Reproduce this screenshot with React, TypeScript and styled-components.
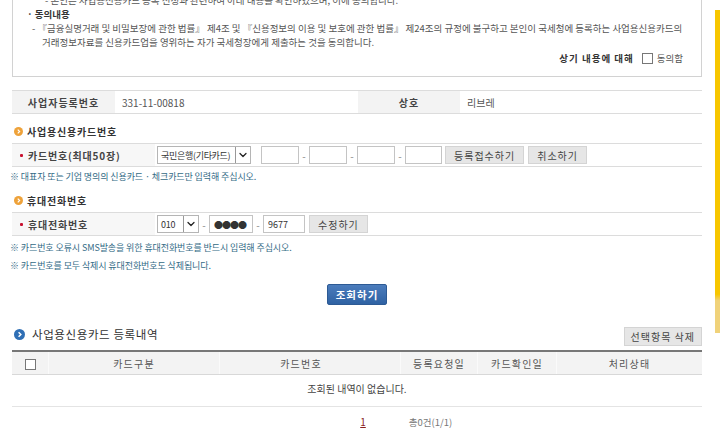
import styled, { createGlobalStyle } from 'styled-components';
import { ChevronDown } from 'lucide-react';

const GlobalStyle = createGlobalStyle`
  html, body {
    margin: 0;
    padding: 0;
    background: #fff;
    overflow: hidden;
  }
  body {
    font-family: "Noto Sans CJK KR", "Noto Sans", sans-serif;
    font-size: 10px;
    color: #555;
  }
`;

const Page = styled.div`
  width: 690px;
  margin-left: 12px;
`;

const AgreeBox = styled.div`
  margin-top: -20px;
  border: 1px solid #d2d2d2;
  padding: 12px 16px 11px 14px;
  font-size: 9.5px;
  letter-spacing: 0;
  line-height: 14px;
  color: #555;
`;

const BoxLine = styled.div<{ $indent?: number; $bold?: boolean }>`
  padding-left: ${(p) => p.$indent || 0}px;
  font-weight: ${(p) => (p.$bold ? 700 : 400)};
  color: ${(p) => (p.$bold ? '#333' : '#555')};
  white-space: nowrap;
`;

const AgreeRow = styled.div`
  margin-top: 2px;
  display: flex;
  justify-content: flex-end;
  align-items: center;
  gap: 8px;
  padding-right: 2px;
  strong {
    color: #333;
    letter-spacing: 1px;
  }
  label {
    display: flex;
    align-items: center;
    gap: 4px;
  }
`;

const CheckBox = styled.span`
  display: inline-block;
  width: 9px;
  height: 9px;
  border: 1px solid #777;
  background: #fff;
`;

const InfoTable = styled.div`
  margin-top: 13px;
  display: grid;
  grid-template-columns: 103px 243px 102px 1fr;
  border-top: 1px solid #dcdcdc;
  border-bottom: 1px solid #dcdcdc;
  height: 22px;
`;

const InfoLabel = styled.div`
  background: #f3f3f3;
  display: flex;
  align-items: center;
  justify-content: center;
  font-weight: 700;
  color: #444;
  letter-spacing: 1px;
`;

const InfoValue = styled.div`
  display: flex;
  align-items: center;
  padding-left: 7px;
  color: #555;
`;

const SectionTitle = styled.div<{ $top: number }>`
  margin-top: ${(p) => p.$top}px;
  display: flex;
  align-items: center;
  gap: 4px;
  height: 14px;
  padding-left: 2px;
  font-weight: 700;
  color: #333;
  letter-spacing: 0.8px;
`;

const FormRow = styled.div`
  margin-top: 5px;
  display: grid;
  grid-template-columns: 143px 1fr;
  border-top: 1px solid #dcdcdc;
  border-bottom: 1px solid #dcdcdc;
  height: 22px;
`;

const FormLabel = styled.div`
  background: #f7f7f7;
  display: flex;
  align-items: center;
  gap: 5px;
  padding-left: 8px;
  font-weight: 700;
  color: #444;
  letter-spacing: 0.8px;
`;

const Req = styled.span`
  width: 3px;
  height: 3px;
  background: #c8102e;
  border-radius: 1px;
`;

const Controls = styled.div`
  display: flex;
  align-items: center;
  padding-left: 2px;
  color: #666;
`;

const FakeSelect = styled.div<{ $w: number }>`
  width: ${(p) => p.$w}px;
  height: 18px;
  box-sizing: border-box;
  border: 1px solid #b5b5b5;
  display: flex;
  align-items: center;
  justify-content: space-between;
  padding-left: 3px;
  font-size: 9px;
  letter-spacing: -0.3px;
  white-space: nowrap;
  overflow: hidden;
  color: #333;
  background: #fff;
`;

const Arrow = styled.span`
  flex: none;
  width: 14px;
  height: 16px;
  border-left: 1px solid #999;
  display: flex;
  align-items: center;
  justify-content: center;
  color: #222;
`;

const Field = styled.input<{ $w: number }>`
  width: ${(p) => p.$w}px;
  height: 18px;
  box-sizing: border-box;
  border: 1px solid #c4c4c4;
  font-family: inherit;
  font-size: 9px;
  padding: 0 4px;
  color: #333;
  outline: none;
`;

const Dash = styled.span`
  width: 10px;
  text-align: center;
  color: #888;
`;

const GrayButton = styled.button<{ $ml?: number; $h?: number; $px?: number }>`
  height: ${(p) => p.$h ?? 18}px;
  margin-left: ${(p) => p.$ml ?? 4}px;
  padding: 0 ${(p) => p.$px ?? 8}px;
  border: 1px solid #d4d4d4;
  background: #e6e6e6;
  font-family: inherit;
  font-size: 10px;
  color: #444;
  letter-spacing: 1px;
  cursor: pointer;
`;

const Note = styled.div<{ $top: number }>`
  margin-top: ${(p) => p.$top}px;
  margin-left: -2px;
  line-height: 18px;
  font-size: 9px;
  color: #336b86;
  letter-spacing: -0.1px;
`;

const Center = styled.div`
  margin-top: 9px;
  display: flex;
  justify-content: center;
`;

const BlueButton = styled.button`
  height: 21px;
  padding: 0 8px;
  border: 1px solid #2d5a94;
  border-radius: 2px;
  background: linear-gradient(#4b7cbc, #2f62a3);
  color: #fff;
  font-family: inherit;
  font-size: 10.5px;
  font-weight: 700;
  letter-spacing: 1px;
`;

const ListHead = styled.div`
  margin-top: 22px;
  display: flex;
  align-items: flex-start;
  justify-content: space-between;
  height: 19px;
`;

const ListTitle = styled.div`
  margin-top: -1px;
  display: flex;
  align-items: center;
  gap: 7px;
  height: 16px;
  padding-left: 2px;
  font-size: 11.5px;
  color: #333;
  letter-spacing: 0.6px;
`;

const Table = styled.table`
  margin-top: 4px;
  width: 100%;
  border-collapse: collapse;
  border-top: 2px solid #777;
  th {
    height: 22px;
    background: #f3f3f3;
    font-weight: 400;
    color: #555;
    letter-spacing: 1.2px;
    border-bottom: 1px solid #d8d8d8;
    border-left: 1px solid #fafafa;
    padding: 0;
  }
  th:first-child {
    border-left: none;
  }
  td {
    height: 27px;
    padding: 0 0 4px;
    text-align: center;
    border-bottom: 1px solid #e4e4e4;
    color: #444;
  }
`;

const Pager = styled.div`
  margin-top: 8px;
  display: grid;
  grid-template-columns: 1fr auto 1fr;
  align-items: center;
  height: 14px;
`;

const PageNum = styled.span`
  padding-left: 12px;
  color: #8a1f1f;
  text-decoration: underline;
  font-size: 10px;
  line-height: 12px;
`;

const Total = styled.span`
  padding-left: 43px;
  color: #777;
  font-size: 9.5px;
`;

const SideTab = styled.div`
  position: fixed;
  right: 0;
  top: 10px;
  width: 5px;
  height: 323px;
  background: linear-gradient(#f7c600 0, #f7c600 88%, #f0d27a 90%, #f0d27a 100%);
`;

const Dot = ({ color, size }: { color: string; size: number }) => (
  <svg width={size} height={size} viewBox="0 0 12 12">
    <circle cx="6" cy="6" r="6" fill={color} />
    <path d="M5 3.5 L7.5 6 L5 8.5" stroke="#fff" strokeWidth="1.6" fill="none" />
  </svg>
);

const App = () => {
  return (
    <>
      <GlobalStyle />
      <SideTab />
      <Page>
        <AgreeBox>
          <BoxLine $indent={18}>- 본인은 사업용신용카드 등록 신청과 관련하여 아래 내용을 확인하였으며, 이에 동의합니다.</BoxLine>
          <BoxLine $bold>· 동의내용</BoxLine>
          <BoxLine $indent={5}>- 『금융실명거래 및 비밀보장에 관한 법률』 제4조 및 『신용정보의 이용 및 보호에 관한 법률』 제24조의 규정에 불구하고 본인이 국세청에 등록하는 사업용신용카드의</BoxLine>
          <BoxLine $indent={15}>거래정보자료를 신용카드업을 영위하는 자가 국세청장에게 제출하는 것을 동의합니다.</BoxLine>
          <AgreeRow>
            <strong>상기 내용에 대해</strong>
            <label>
              <CheckBox />
              동의함
            </label>
          </AgreeRow>
        </AgreeBox>

        <InfoTable>
          <InfoLabel>사업자등록번호</InfoLabel>
          <InfoValue>331-11-00818</InfoValue>
          <InfoLabel>상호</InfoLabel>
          <InfoValue>리브레</InfoValue>
        </InfoTable>

        <SectionTitle $top={10}>
          <Dot color="#eea23a" size={9} />
          사업용신용카드번호
        </SectionTitle>
        <FormRow>
          <FormLabel>
            <Req />
            카드번호(최대50장)
          </FormLabel>
          <Controls>
            <FakeSelect $w={94}>
              국민은행(기타카드)
              <Arrow>
                <ChevronDown size={12} strokeWidth={2.5} />
              </Arrow>
            </FakeSelect>
            <Field $w={38} style={{ marginLeft: 10 }} readOnly />
            <Dash>-</Dash>
            <Field $w={38} readOnly />
            <Dash>-</Dash>
            <Field $w={38} readOnly />
            <Dash>-</Dash>
            <Field $w={37} readOnly />
            <GrayButton $ml={3}>등록접수하기</GrayButton>
            <GrayButton>취소하기</GrayButton>
          </Controls>
        </FormRow>
        <Note $top={1}>※ 대표자 또는 기업 명의의 신용카드 · 체크카드만 입력해 주십시오.</Note>

        <SectionTitle $top={7}>
          <Dot color="#eea23a" size={9} />
          휴대전화번호
        </SectionTitle>
        <FormRow>
          <FormLabel>
            <Req />
            휴대전화번호
          </FormLabel>
          <Controls>
            <FakeSelect $w={42}>
              010
              <Arrow>
                <ChevronDown size={12} strokeWidth={2.5} />
              </Arrow>
            </FakeSelect>
            <Dash>-</Dash>
            <Field $w={44} value="●●●●" readOnly style={{ fontSize: 9, letterSpacing: -1 }} />
            <Dash>-</Dash>
            <Field $w={42} value="9677" readOnly />
            <GrayButton>수정하기</GrayButton>
          </Controls>
        </FormRow>
        <Note $top={3}>
          ※ 카드번호 오류시 SMS발송을 위한 휴대전화번호를 반드시 입력해 주십시오.
          <br />※ 카드번호를 모두 삭제시 휴대전화번호도 삭제됩니다.
        </Note>

        <Center>
          <BlueButton>조회하기</BlueButton>
        </Center>

        <ListHead>
          <ListTitle>
            <Dot color="#2f6fb5" size={11} />
            사업용신용카드 등록내역
          </ListTitle>
          <GrayButton $h={19} $px={6}>선택항목 삭제</GrayButton>
        </ListHead>

        <Table>
          <thead>
            <tr>
              <th style={{ width: 36 }}>
                <CheckBox style={{ verticalAlign: 'middle' }} />
              </th>
              <th style={{ width: 170 }}>카드구분</th>
              <th style={{ width: 162, paddingRight: 18 }}>카드번호</th>
              <th style={{ width: 76 }}>등록요청일</th>
              <th style={{ width: 78 }}>카드확인일</th>
              <th>처리상태</th>
            </tr>
          </thead>
          <tbody>
            <tr>
              <td colSpan={6}>조회된 내역이 없습니다.</td>
            </tr>
          </tbody>
        </Table>

        <Pager>
          <div />
          <PageNum>1</PageNum>
          <Total>총0건(1/1)</Total>
        </Pager>
      </Page>
    </>
  );
};

export default App;
